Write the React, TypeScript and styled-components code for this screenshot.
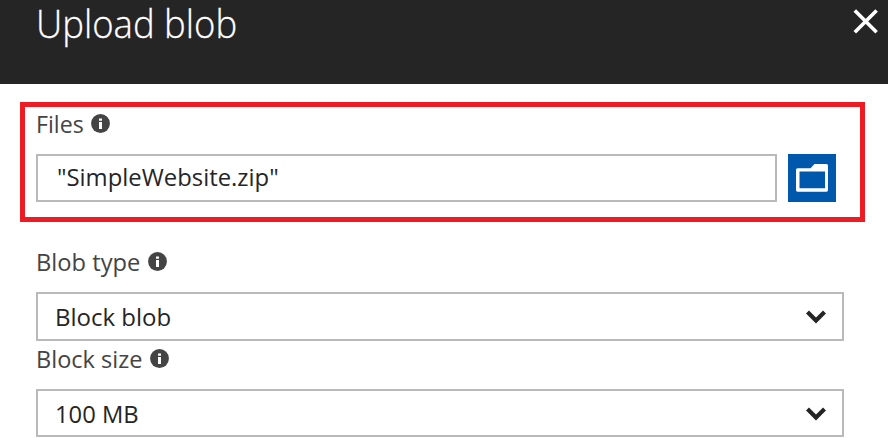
import React from "react";
import styled, { createGlobalStyle } from "styled-components";

const GlobalStyle = createGlobalStyle`
  * { box-sizing: border-box; }
  body { margin: 0; background: #fff; overflow: hidden; font-family: "Open Sans", "Noto Sans", sans-serif; }
  svg { display: block; flex: none; }
`;

const Blade = styled.main`
  width: 888px;
  height: 441px;
  background: #fff;
`;

const Header = styled.header`
  display: flex;
  justify-content: space-between;
  height: 84px;
  padding: 0 10px 0 36px;
  background: #252525;
  color: #fff;
`;

const Title = styled.h1<{ $stretch: number }>`
  margin: 0;
  font-size: 38px;
  line-height: 46px;
  font-weight: 300;
  -webkit-text-stroke: 0.3px #fff;
  white-space: nowrap;
  transform: scaleX(${(p) => p.$stretch});
  transform-origin: 0 0;
`;

const PlainButton = styled.button`
  display: block;
  height: 25px;
  margin: 9px 0 0;
  padding: 0;
  border: 0;
  background: none;
  color: inherit;
`;

const Form = styled.form`
  display: flex;
  flex-direction: column;
  padding-top: 18px;
`;

const Highlight = styled.section`
  width: 845px;
  height: 120px;
  margin-left: 20px;
  padding: 0 24px 0 11px;
  border: 5px solid #ed1c24;
`;

const Field = styled.div<{ $gap: number }>`
  margin: ${(p) => p.$gap}px 44px 0 36px;
`;

const LabelRow = styled.div<{ $height: number }>`
  display: flex;
  align-items: flex-start;
  height: ${(p) => p.$height}px;
`;

const LabelText = styled.label<{ $width: number; $stretch: number }>`
  width: ${(p) => p.$width}px;
  color: #444;
  font-size: 24.5px;
  line-height: 34px;
  white-space: nowrap;

  span {
    display: inline-block;
    transform: scaleX(${(p) => p.$stretch});
    transform-origin: 0 0;
  }
`;

const InfoSvg = styled.svg`
  margin-top: 7px;
`;

const FileRow = styled.div`
  display: flex;
  gap: 11px;
`;

const Box = styled.div<{ $height: number; $indent: number; $drop?: number }>`
  display: flex;
  flex: 1;
  justify-content: space-between;
  align-items: center;
  height: ${(p) => p.$height}px;
  padding: ${(p) => p.$drop ?? 0}px 16px 0 ${(p) => p.$indent}px;
  border: 2px solid #bababa;
  color: #252525;
`;

const Value = styled.span<{ $stretch: number; $lift?: number }>`
  margin-bottom: ${(p) => p.$lift ?? 0}px;
  font-size: 24.5px;
  line-height: 34px;
  white-space: nowrap;
  transform: scaleX(${(p) => p.$stretch});
  transform-origin: 0 0;
`;

const BrowseButton = styled.button`
  width: 48px;
  height: 48px;
  padding: 0;
  border: 0;
  background: #0058ad;
`;

const Info = () => (
  <InfoSvg width="19" height="19" viewBox="0 0 19 19">
    <circle cx="9.5" cy="9.5" r="9.4" fill="#444" />
    <path d="M8 4.6h3v2.2H8zM8 8h3v7H8z" fill="#fff" />
  </InfoSvg>
);

const Chevron = () => (
  <svg width="20" height="14" viewBox="0 0 20 14">
    <path d="M1.5 2 10 10.5 18.5 2" fill="none" stroke="#252525" strokeWidth="4.2" />
  </svg>
);

type LabelProps = { text: string; width: number; height: number; stretch: number };
const Label = ({ text, width, height, stretch }: LabelProps) => (
  <LabelRow $height={height}>
    <LabelText $width={width} $stretch={stretch}><span>{text}</span></LabelText>
    <Info />
  </LabelRow>
);

export default function App() {
  return (
    <>
      <GlobalStyle />
      <Blade>
        <Header>
          <Title $stretch={0.96}>Upload blob</Title>
          <PlainButton aria-label="Close">
            <svg width="25" height="25" viewBox="0 0 25 25">
              <path d="M1.8 1.5 23.6 23.3M23.6 1.5 1.8 23.3" stroke="#fff" strokeWidth="3.6" />
            </svg>
          </PlainButton>
        </Header>
        <Form>
          <Highlight>
            <Label text="Files" width={55} height={47} stretch={0.945} />
            <FileRow>
              <Box $height={48} $indent={19}>
                <Value $stretch={0.974} $lift={2}>"SimpleWebsite.zip"</Value>
              </Box>
              <BrowseButton type="button" aria-label="Browse">
                <svg width="48" height="48" viewBox="0 0 48 48">
                  <path
                    fillRule="evenodd"
                    fill="#fff"
                    d="M9.5 14.2H22.5L26.5 10H38.5Q40 10 40 11.5V36Q40 37.7 38.5 37.7H9.5Q8 37.7 8 36V15.7Q8 14.2 9.5 14.2ZM11.5 17.5V34.2H37V17.5Z"
                  />
                </svg>
              </BrowseButton>
            </FileRow>
          </Highlight>
          <Field $gap={23}>
            <Label text="Blob type" width={112} height={47} stretch={0.967} />
            <Box $height={49} $indent={17}>
              <Value $stretch={0.98}>Block blob</Value>
              <Chevron />
            </Box>
          </Field>
          <Field $gap={1}>
            <Label text="Block size" width={114} height={47} stretch={0.96} />
            <Box $height={48} $indent={17} $drop={1}>
              <Value $stretch={0.97}>100 MB</Value>
              <Chevron />
            </Box>
          </Field>
        </Form>
      </Blade>
    </>
  );
}
